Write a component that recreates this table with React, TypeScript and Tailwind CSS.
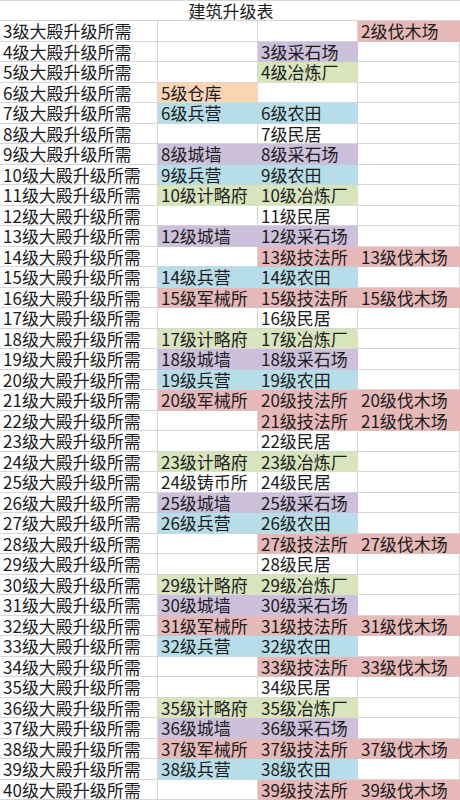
import React from "react";

type C = "" | "o" | "b" | "p" | "g" | "r";
type Cell = [string, C];

const bg: Record<C, string> = {
  "": "bg-white border-[#d6d6d6]",
  o: "bg-[#fbd4b4] border-[#fbd4b4]",
  b: "bg-[#b7dee8] border-[#b7dee8]",
  p: "bg-[#ccc0da] border-[#ccc0da]",
  g: "bg-[#d8e4bc] border-[#d8e4bc]",
  r: "bg-[#e6b8b7] border-[#e6b8b7]",
};

const E: Cell = ["", ""];

const rows: [Cell, Cell, Cell][] = [
  [E, E, ["2级伐木场", "r"]],
  [E, ["3级采石场", "p"], E],
  [E, ["4级冶炼厂", "g"], E],
  [["5级仓库", "o"], E, E],
  [["6级兵营", "b"], ["6级农田", "b"], E],
  [E, ["7级民居", ""], E],
  [["8级城墙", "p"], ["8级采石场", "p"], E],
  [["9级兵营", "b"], ["9级农田", "b"], E],
  [["10级计略府", "g"], ["10级冶炼厂", "g"], E],
  [E, ["11级民居", ""], E],
  [["12级城墙", "p"], ["12级采石场", "p"], E],
  [E, ["13级技法所", "r"], ["13级伐木场", "r"]],
  [["14级兵营", "b"], ["14级农田", "b"], E],
  [["15级军械所", "r"], ["15级技法所", "r"], ["15级伐木场", "r"]],
  [E, ["16级民居", ""], E],
  [["17级计略府", "g"], ["17级冶炼厂", "g"], E],
  [["18级城墙", "p"], ["18级采石场", "p"], E],
  [["19级兵营", "b"], ["19级农田", "b"], E],
  [["20级军械所", "r"], ["20级技法所", "r"], ["20级伐木场", "r"]],
  [E, ["21级技法所", "r"], ["21级伐木场", "r"]],
  [E, ["22级民居", ""], E],
  [["23级计略府", "g"], ["23级冶炼厂", "g"], E],
  [["24级铸币所", ""], ["24级民居", ""], E],
  [["25级城墙", "p"], ["25级采石场", "p"], E],
  [["26级兵营", "b"], ["26级农田", "b"], E],
  [E, ["27级技法所", "r"], ["27级伐木场", "r"]],
  [E, ["28级民居", ""], E],
  [["29级计略府", "g"], ["29级冶炼厂", "g"], E],
  [["30级城墙", "p"], ["30级采石场", "p"], E],
  [["31级军械所", "r"], ["31级技法所", "r"], ["31级伐木场", "r"]],
  [["32级兵营", "b"], ["32级农田", "b"], E],
  [E, ["33级技法所", "r"], ["33级伐木场", "r"]],
  [E, ["34级民居", ""], E],
  [["35级计略府", "g"], ["35级冶炼厂", "g"], E],
  [["36级城墙", "p"], ["36级采石场", "p"], E],
  [["37级军械所", "r"], ["37级技法所", "r"], ["37级伐木场", "r"]],
  [["38级兵营", "b"], ["38级农田", "b"], E],
  [E, ["39级技法所", "r"], ["39级伐木场", "r"]],
];

function Td({ cell }: { cell: Cell }) {
  return (
    <div
      className={`flex items-center pl-[3px] border-r border-b whitespace-nowrap ${bg[cell[1]]}`}
    >
      {cell[0]}
    </div>
  );
}

export default function App() {
  return (
    <div
      className="w-[460px] h-[800px] bg-white text-[#1c1c1c] text-[17px] leading-[19px] overflow-hidden"
      style={{ fontFamily: '"Noto Sans CJK SC", "Noto Sans", sans-serif' }}
    >
      <div className="h-[21px] border-t border-b border-[#d6d6d6] flex items-center justify-center pl-[2px]">
        建筑升级表
      </div>
      <div className="grid grid-cols-[158px_100px_100px_102px] auto-rows-[20.5px]">
        {rows.map((r, i) => (
          <React.Fragment key={i}>
            <div className="flex items-center pl-[3px] border-r border-b border-[#d6d6d6] bg-white whitespace-nowrap">
              {i + 3}级大殿升级所需
            </div>
            <Td cell={r[0]} />
            <Td cell={r[1]} />
            <Td cell={r[2]} />
          </React.Fragment>
        ))}
      </div>
    </div>
  );
}
